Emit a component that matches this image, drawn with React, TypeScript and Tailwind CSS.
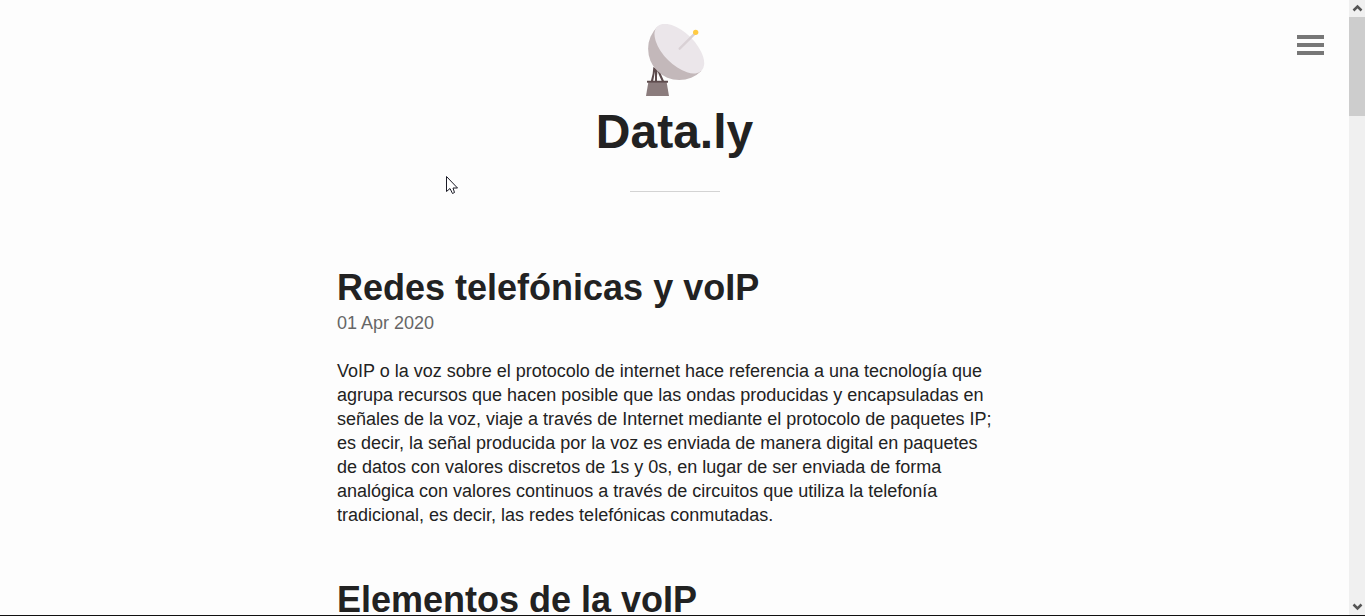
import React from "react";

function DishLogo() {
  return (
    <svg viewBox="12 27 216 216" className="size-[72px]" role="img" aria-label="Antena">
      <path d="M55 156 L62 160 L58 180 L54 200 H47 L53 176Z M60 160 L68 164 L66 182 V200 H60 V180Z M66 164 L76 170 L79 180 L87 198 L81 200 L72 180Z" fill="#5d4b4d" />
      <path d="M40 202 H95 L102 243 H33Z" fill="#8b7c7d" />
      <rect x="36" y="197" width="63" height="6" rx="1" fill="#5d4b4d" />
      <path d="M67 35 A93 93 0 1 0 199 168Z" fill="#c3b8ba" />
      <ellipse cx="133" cy="101" rx="94" ry="48" transform="rotate(45 133 101)" fill="#ebe6ea" />
      <path d="M134 101 L180 55" stroke="#d9d1d5" strokeWidth="7" strokeLinecap="round" />
      <circle cx="182" cy="52" r="8" fill="#ffcb43" />
    </svg>
  );
}

function Pointer() {
  return (
    <svg viewBox="0 0 12 19" className="pointer-events-none absolute left-[446px] top-[176px] h-[19px] w-3" aria-hidden="true">
      <path d="M.5 .5 V15.500 L4 12.500 L6.500 17.500 L8.500 16.500 L7 12 H11.500Z" fill="#fff" stroke="#1b1b26" strokeWidth="1" />
    </svg>
  );
}

function Post({ title, date, children }: { title: string; date?: string; children?: React.ReactNode }) {
  return (
    <article className="mb-[50px]">
      <h2 className="text-4xl leading-[46px] font-bold">{title}</h2>
      {date && <time className="mb-6 block text-lg leading-6 text-[#666]">{date}</time>}
      <p className="max-w-[660px] text-lg leading-6">{children}</p>
    </article>
  );
}

function Scrollbar() {
  return (
    <div className="flex w-4 shrink-0 flex-col bg-[#f0f0f0]" aria-hidden="true">
      <svg viewBox="0 0 16 17" className="h-[17px] w-4">
        <path d="M4.500 10.500 L8.500 6.500 L12.500 10.500" fill="none" stroke="#555" strokeWidth="2.500" />
      </svg>
      <div className="h-[99px] bg-[#cdcdcd]" />
      <svg viewBox="0 0 16 17" className="mt-auto h-[17px] w-4">
        <path d="M4.500 6.500 L8.500 10.500 L12.500 6.500" fill="none" stroke="#555" strokeWidth="2.500" />
      </svg>
    </div>
  );
}

export default function App() {
  return (
    <div className="flex h-screen overflow-hidden border-b border-[#111] bg-[#fdfdfd] font-['Liberation_Sans',Arial,sans-serif] text-[#222]">
      <div className="relative min-w-0 flex-1 overflow-hidden">
        <button type="button" aria-label="Menú" className="absolute right-[25px] top-[35px] flex w-[27px] flex-col gap-1">
          <span className="h-1 w-full bg-[#777]" />
          <span className="h-1 w-full bg-[#777]" />
          <span className="h-1 w-full bg-[#777]" />
        </button>
        <header className="flex flex-col items-center pt-6">
          <DishLogo />
          <h1 className="mt-1 text-5xl leading-[64px] font-bold">Data.ly</h1>
          <hr className="mt-[27px] w-[90px] border-[#d3d3d3]" />
        </header>
        <main className="mx-auto mt-[73px] max-w-[675px]">
          <Post title="Redes telefónicas y voIP" date="01 Apr 2020">
            VoIP o la voz sobre el protocolo de internet hace referencia a una tecnología que agrupa recursos que hacen
            posible que las ondas producidas y encapsuladas en señales de la voz, viaje a través de Internet mediante el
            protocolo de paquetes IP; es decir, la señal producida por la voz es enviada de manera digital en paquetes de
            datos con valores discretos de 1s y 0s, en lugar de ser enviada de forma analógica con valores continuos a
            través de circuitos que utiliza la telefonía tradicional, es decir, las redes telefónicas conmutadas.
          </Post>
          <Post title="Elementos de la voIP" />
        </main>
        <Pointer />
      </div>
      <Scrollbar />
    </div>
  );
}
